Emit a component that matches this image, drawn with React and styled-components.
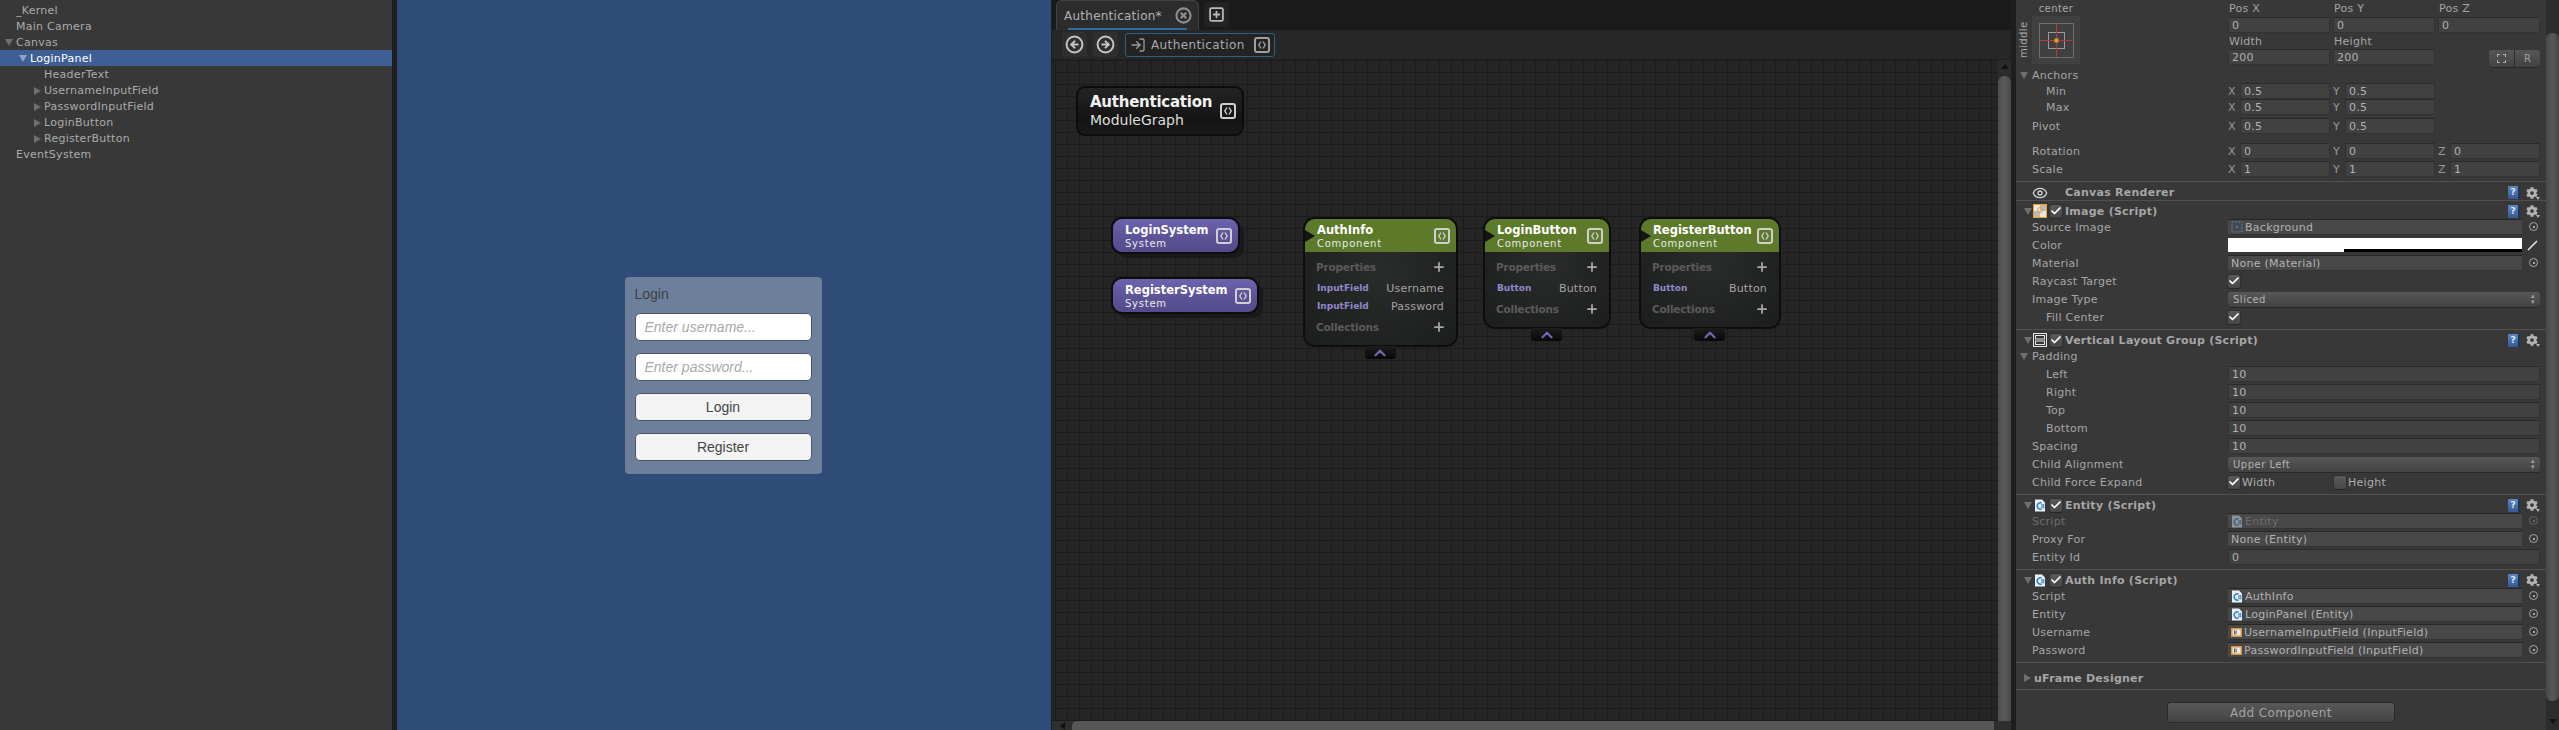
import styled, { createGlobalStyle } from 'styled-components';
import { CircleArrowLeft, CircleArrowRight, CircleX, SquarePlus, LogIn, Eye, Plus, ChevronUp, Check } from 'lucide-react';
import { FaCog } from 'react-icons/fa';

const UI_FONT = '"DejaVu Sans", sans-serif';

const GlobalStyle = createGlobalStyle`
    html, body {
        margin: 0;
        padding: 0;
        background: #1c1c1c;
        overflow: hidden;
    }
    * {
        box-sizing: border-box;
    }
`;

// Page columns
const Page = styled.div`
    display: flex;
    width: 2559px;
    height: 730px;
    font-family: ${UI_FONT};
    font-size: 11px;
    letter-spacing: 0.27px;
    color: #adadad;
    background: #1e1e1e;
    overflow: hidden;
`;

// Hierarchy
const Hierarchy = styled.div`
    width: 392px;
    margin-right: 5px;
    padding-top: 2px;
    background: #383838;
    flex-shrink: 0;
`;

const TreeRow = styled.div`
    display: flex;
    align-items: center;
    height: 16px;
    padding-left: ${p => 2 + p.$depth * 14}px;
    padding-top: 1px;
    background: ${p => (p.$selected ? '#3e5f96' : 'transparent')};
    color: ${p => (p.$selected ? '#ffffff' : '#ababab')};
    white-space: nowrap;
`;

const ArrowSlot = styled.span`
    display: flex;
    align-items: center;
    justify-content: center;
    width: 14px;
    height: 15px;
    flex-shrink: 0;
`;

const TriDown = styled.span`
    display: block;
    width: 0;
    height: 0;
    border-left: 4px solid transparent;
    border-right: 4px solid transparent;
    border-top: 7px solid ${p => p.$color || '#6f6f6f'};
`;

const TriRight = styled.span`
    display: block;
    width: 0;
    height: 0;
    border-top: 4px solid transparent;
    border-bottom: 4px solid transparent;
    border-left: 7px solid #6f6f6f;
`;

// Game view
const GameView = styled.div`
    display: flex;
    justify-content: center;
    align-items: flex-start;
    width: 654px;
    padding: 277px 2px 0 0;
    margin-right: 1px;
    background: #2f4c78;
    flex-shrink: 0;
`;

const LoginPanel = styled.div`
    display: flex;
    flex-direction: column;
    gap: 12px;
    width: 197px;
    height: 197px;
    padding: 9px 10px;
    background: #6e7f9b;
    border-radius: 4px;
    font-family: "Liberation Sans", sans-serif;
    font-size: 14px;
    letter-spacing: 0;
`;

const PanelTitle = styled.div`
    height: 14.5px;
    line-height: 17px;
    color: #3d4048;
`;

const TextInput = styled.input`
    width: 100%;
    height: 28px;
    padding: 0 9px;
    border: 1px solid #4d5465;
    border-radius: 5px;
    background: #ffffff;
    font-family: inherit;
    font-size: 14px;
    font-style: italic;
    outline: none;
    &::placeholder {
        color: #a9a9a9;
        opacity: 1;
    }
`;

const PanelButton = styled.button`
    width: 100%;
    height: 28px;
    padding: 0;
    border: 1px solid #4d5465;
    border-radius: 5px;
    background: #f4f4f4;
    color: #444444;
    font-family: inherit;
    font-size: 14px;
`;

// Graph editor
const GraphEditor = styled.div`
    display: flex;
    flex-direction: column;
    width: 959px;
    margin-right: 5px;
    flex-shrink: 0;
`;

const TabBar = styled.div`
    display: flex;
    align-items: flex-start;
    gap: 5px;
    height: 30px;
    padding-left: 4px;
    background: #1a1a1a;
`;

const Tab = styled.div`
    position: relative;
    display: flex;
    align-items: center;
    justify-content: space-between;
    width: 143px;
    height: 30px;
    padding: 0 6px 0 7px;
    background: #2c2c2c;
    border: 1px solid #434343;
    border-bottom: none;
    border-radius: 6px 6px 0 0;
    color: #b2b2b2;
    font-size: 12px;
    letter-spacing: 0.25px;
    &::after {
        content: '';
        position: absolute;
        left: 11px;
        right: 11px;
        bottom: 0;
        height: 2px;
        background: #2f6d9c;
    }
`;

const IconTile = styled.div`
    display: flex;
    align-items: center;
    justify-content: center;
    width: 25px;
    height: 25px;
    margin-top: 2px;
    border-radius: 3px;
    background: #232323;
    color: #b9b9b9;
`;

const Toolbar = styled.div`
    display: flex;
    align-items: center;
    gap: 6px;
    height: 30px;
    padding-left: 10px;
    background: #272727;
    border-bottom: 1px solid #202020;
`;

const NavButton = styled(IconTile)`
    margin-top: 0;
    background: #2f2f2f;
    color: #c6c6c6;
`;

const Crumb = styled.div`
    display: flex;
    align-items: center;
    justify-content: space-between;
    width: 150px;
    height: 24px;
    margin-left: 1px;
    padding: 0 4px;
    background: #232323;
    border: 1px solid #2b6086;
    border-radius: 3px;
    color: #a9a9a9;
    font-size: 12px;
    letter-spacing: 0.4px;
`;

const CrumbLabel = styled.span`
    flex: 1;
    margin-left: 5px;
`;

const GraphBody = styled.div`
    flex: 1;
    display: grid;
    grid-template-columns: 1fr 13px;
    grid-template-rows: 1fr 9px;
    min-height: 0;
`;

const GraphCanvas = styled.div`
    position: relative;
    overflow: hidden;
    background-color: #252525;
    background-image:
        linear-gradient(#1b1b1b 1px, transparent 1px),
        linear-gradient(90deg, #1b1b1b 1px, transparent 1px);
    background-size: 12px 12px;
    background-position: 3px 0;
`;

const VScroll = styled.div`
    display: flex;
    flex-direction: column;
    align-items: center;
    padding-top: 4px;
    background: #2b2b2b;
`;

const ScrollUp = styled.span`
    width: 0;
    height: 0;
    margin-bottom: 7px;
    border-left: 4px solid transparent;
    border-right: 4px solid transparent;
    border-bottom: 5px solid #111111;
`;

const VThumb = styled.div`
    flex: 1;
    width: 13px;
    border-radius: 6px 6px 0 0;
    background: linear-gradient(90deg, #4c4c4c, #5a5a5a 50%, #484848);
`;

const HScroll = styled.div`
    grid-column: 1 / 3;
    display: flex;
    align-items: center;
    padding-left: 8px;
    background: #2e2e2e;
`;

const ScrollLeft = styled.span`
    width: 0;
    height: 0;
    margin-right: 7px;
    border-top: 4px solid transparent;
    border-bottom: 4px solid transparent;
    border-right: 5px solid #111111;
`;

const HThumb = styled.div`
    width: 922px;
    height: 9px;
    border-radius: 5px 0 0 0;
    background: #565656;
`;

// Graph nodes, their place on the canvas is the content
const NodeBox = styled.div`
    position: absolute;
    left: ${p => p.$x}px;
    top: ${p => p.$y}px;
    width: ${p => p.$w}px;
`;

const ModuleNode = styled(NodeBox)`
    display: flex;
    align-items: center;
    justify-content: space-between;
    height: 50px;
    padding: 0 6px 0 12px;
    background: linear-gradient(#232323, #141414 70%, #191919);
    border: 2px solid #0c0c0c;
    border-radius: 9px;
    color: #f2f2f2;
`;

const ModuleName = styled.div`
    font-size: 15px;
    font-weight: bold;
    line-height: 18px;
    letter-spacing: -0.25px;
`;

const ModuleKind = styled.div`
    font-size: 14px;
    line-height: 18px;
    letter-spacing: 0;
    color: #dedede;
`;

const SystemNode = styled(NodeBox)`
    display: flex;
    align-items: center;
    justify-content: space-between;
    height: 33px;
    padding: 0 6px 0 12px;
    background: linear-gradient(#6c64ae, #5d5499 50%, #544b8d);
    border-radius: 9px;
    box-shadow: 0 0 0 2px #0d0d0d, 5px 5px 0 1px #191919;
`;

const NodeTitle = styled.div`
    color: #ffffff;
    font-size: 11.5px;
    font-weight: bold;
    line-height: 15px;
    letter-spacing: 0;
    white-space: nowrap;
`;

const NodeKind = styled.div`
    color: #e8e8e8;
    font-size: 10px;
    line-height: 11px;
    letter-spacing: 0.75px;
`;

const ComponentNode = styled(NodeBox)`
    border-radius: 10px;
    background: radial-gradient(ellipse at 50% 40%, #2a2c2b, #1c1d1d);
    box-shadow: 0 0 0 2px #0d0d0d;
`;

const NodeHeader = styled.div`
    position: relative;
    display: flex;
    align-items: center;
    justify-content: space-between;
    height: 33px;
    padding: 0 6px 0 12px;
    border-radius: 10px 10px 0 0;
    background: #5c7a2a;
    &::before {
        content: '';
        position: absolute;
        left: 0;
        top: 11px;
        border-top: 6px solid transparent;
        border-bottom: 6px solid transparent;
        border-left: 10px solid #141414;
    }
`;

const NodeBody = styled.div`
    display: flex;
    flex-direction: column;
    padding: 6px 10px 9px 11px;
`;

const GroupRow = styled.div`
    display: flex;
    align-items: center;
    justify-content: space-between;
    height: 18px;
    color: #5b5b5b;
    font-size: 10.5px;
    font-weight: bold;
    letter-spacing: -0.2px;
`;

const ItemList = styled.div`
    margin: 3px 0;
`;

const ItemRow = styled.div`
    display: flex;
    align-items: center;
    justify-content: space-between;
    height: 18px;
    padding: 0 2px 0 1px;
    color: #a3a3a3;
    font-size: 11px;
    letter-spacing: 0.2px;
`;

const ItemType = styled.span`
    color: #8f89cc;
    font-size: 9px;
    font-weight: bold;
    letter-spacing: 0;
`;

const ExpandTab = styled.div`
    position: absolute;
    left: 50%;
    top: 100%;
    display: flex;
    align-items: center;
    justify-content: center;
    width: 31px;
    height: 13px;
    margin-left: -16px;
    margin-top: 1px;
    background: linear-gradient(#1d1d1d, #080808);
    border-radius: 0 0 3px 3px;
    color: #6f68ae;
`;

const CodeFrame = styled.svg`
    flex-shrink: 0;
`;

function CodeIcon({ size = 16, color = '#cfcfcf' }) {
    return (
        <CodeFrame width={size} height={size} viewBox="0 0 16 16" fill="none" stroke={color}>
            <rect x="1" y="1" width="14" height="14" rx="2" strokeWidth="2" />
            <path d="M7 4.5 L4.8 8 L7 11.5 M9 4.5 L11.2 8 L9 11.5" strokeWidth="1.4" />
        </CodeFrame>
    );
}

function Component({ x, w, title, children }) {
    return (
        <ComponentNode $x={x} $y={159} $w={w}>
            <NodeHeader>
                <div>
                    <NodeTitle>{title}</NodeTitle>
                    <NodeKind>Component</NodeKind>
                </div>
                <CodeIcon />
            </NodeHeader>
            <NodeBody>
                <GroupRow>Properties<Plus size={14} strokeWidth={3} color="#a8a8a8" /></GroupRow>
                <ItemList>{children}</ItemList>
                <GroupRow>Collections<Plus size={14} strokeWidth={3} color="#a8a8a8" /></GroupRow>
            </NodeBody>
            <ExpandTab><ChevronUp size={18} strokeWidth={3} /></ExpandTab>
        </ComponentNode>
    );
}

// Inspector
const InspectorWrap = styled.div`
    display: flex;
    flex: 1;
    min-width: 0;
`;

const Inspector = styled.div`
    display: flex;
    flex-direction: column;
    width: 530px;
    background: #383838;
    flex-shrink: 0;
`;

const InspectorScroll = styled.div`
    position: relative;
    flex: 1;
    padding-top: 33px;
    background: #2c2c2c;
`;

const InspectorThumb = styled.div`
    width: 100%;
    height: 668px;
    border-radius: 6px;
    background: linear-gradient(90deg, #484848, #585858 50%, #474747);
`;

const ScrollDown = styled.span`
    position: absolute;
    left: 3px;
    bottom: 6px;
    border-left: 4px solid transparent;
    border-right: 4px solid transparent;
    border-top: 5px solid #111111;
`;

const RectBlock = styled.div`
    display: flex;
    height: 67px;
`;

const AnchorWidget = styled.div`
    display: grid;
    grid-template-columns: 16px 48px;
    grid-template-rows: 16px 48px;
    width: 212px;
    flex-shrink: 0;
`;

const AnchorTop = styled.div`
    grid-column: 2;
    text-align: center;
    font-size: 10px;
    line-height: 18px;
    color: #a8a8a8;
    letter-spacing: 0.4px;
`;

const AnchorSide = styled.div`
    writing-mode: vertical-rl;
    transform: rotate(180deg);
    text-align: center;
    font-size: 10px;
    line-height: 16px;
    color: #a8a8a8;
    letter-spacing: 0.4px;
`;

const RectColumns = styled.div`
    flex: 1;
    display: grid;
    grid-template-columns: repeat(3, 1fr);
    grid-template-rows: 17px 16px 16px;
    column-gap: 3px;
    margin-right: 6px;
`;

const SmallCaption = styled.div`
    padding-left: 1px;
    align-self: center;
    color: #a5a5a5;
`;

const Row = styled.div`
    display: flex;
    align-items: center;
    height: ${p => p.$h || 18}px;
    margin-top: ${p => p.$mt || 0}px;
    padding: 0 6px 0 16px;
`;

const Label = styled.div`
    display: flex;
    align-items: center;
    width: 196px;
    padding-left: ${p => (p.$indent ? 14 : 0)}px;
    color: ${p => (p.$dim ? '#6e6e6e' : '#a6a6a6')};
    flex-shrink: 0;
    white-space: nowrap;
`;

const LabelArrow = styled.span`
    width: 8px;
    margin-left: -12px;
    margin-right: 4px;
`;

const Field = styled.div`
    flex: 1;
    min-width: 0;
    height: 16px;
    padding: 1px 3px 0;
    line-height: 14px;
    background: #414141;
    border-top: 1px solid #2a2a2a;
    border-left: 1px solid #333333;
    border-right: 1px solid #333333;
    border-bottom: 1px solid #333333;
    color: #b2b2b2;
    white-space: nowrap;
    overflow: hidden;
`;

const Axes = styled.div`
    flex: 1;
    display: grid;
    grid-template-columns: repeat(3, 1fr);
    column-gap: 3px;
`;

const AxisCell = styled.div`
    display: flex;
    align-items: center;
`;

const AxisLetter = styled.span`
    width: 12px;
    flex-shrink: 0;
    color: #9a9a9a;
`;

const ObjectField = styled.div`
    display: flex;
    align-items: center;
    gap: 2px;
    flex: 1;
    min-width: 0;
    height: 16px;
    margin-right: 18px;
    padding-left: 3px;
    background: #484848;
    border-top: 1px solid #262626;
    border-bottom: 1px solid #333333;
    color: ${p => (p.$dim ? '#6f6f6f' : '#b2b2b2')};
    white-space: nowrap;
    position: relative;
`;

const Picker = styled.span`
    position: absolute;
    right: -16px;
    top: 2px;
    width: 9px;
    height: 9px;
    border: 1px solid ${p => (p.$dim ? '#666666' : '#a5a5a5')};
    border-radius: 50%;
    &::after {
        content: '';
        position: absolute;
        left: 2.5px;
        top: 2.5px;
        width: 2px;
        height: 2px;
        background: ${p => (p.$dim ? '#666666' : '#a5a5a5')};
    }
`;

const ColorField = styled.div`
    position: relative;
    flex: 1;
    height: 14px;
    margin-right: 18px;
    background: #ffffff;
    &::after {
        content: '';
        position: absolute;
        left: 116px;
        right: 0;
        bottom: 0;
        height: 3px;
        background: #000000;
    }
`;

const Dropper = styled.svg`
    position: absolute;
    right: -18px;
    top: 0;
`;

const Dropdown = styled.div`
    display: flex;
    align-items: center;
    justify-content: space-between;
    flex: 1;
    height: 15px;
    padding: 0 5px;
    border-radius: 3px;
    background: linear-gradient(#585858, #424242);
    box-shadow: 0 1px 0 #282828;
    color: #b2b2b2;
    font-size: 10px;
    letter-spacing: 0.5px;
`;

const DropdownArrows = styled.span`
    font-size: 7px;
    line-height: 6px;
    color: #a0a0a0;
    text-align: center;
`;

const CheckBox = styled.span`
    display: inline-flex;
    align-items: center;
    justify-content: center;
    width: 12px;
    height: 13px;
    background: linear-gradient(#5a5a5a, #474747);
    border-radius: 2px;
    box-shadow: 0 1px 0 #262626, 0 0 0 1px #303030;
    color: #ffffff;
    flex-shrink: 0;
`;

const CheckLabel = styled.span`
    width: ${p => p.$w}px;
    margin-left: 2px;
`;

const Section = styled.div`
    margin-top: ${p => p.$mt || 0}px;
    padding-bottom: ${p => p.$pb ?? 3}px;
    border-top: 1px solid #505050;
`;

const SectionHeader = styled.div`
    display: flex;
    align-items: center;
    height: ${p => p.$h || 17}px;
    padding: 3px 6px 0 7px;
`;

const SectionTitle = styled.div`
    flex: 1;
    margin-left: ${p => p.$ml || 3}px;
    color: #a6a6a6;
    font-size: 11px;
    font-weight: bold;
    letter-spacing: 0.25px;
    white-space: nowrap;
`;

const HeaderSlot = styled.span`
    display: flex;
    align-items: center;
    justify-content: center;
    width: ${p => p.$w}px;
    margin-right: ${p => p.$mr || 0}px;
    flex-shrink: 0;
`;

const HelpBook = styled.span`
    width: 12px;
    height: 13px;
    margin-right: 6px;
    background: linear-gradient(#5f87c1, #35588f);
    border-right: 2px solid #1f3558;
    border-radius: 1px;
    color: #dfe8f5;
    font-size: 9px;
    font-weight: bold;
    line-height: 13px;
    letter-spacing: 0;
    text-align: center;
`;

const GearWrap = styled.span`
    position: relative;
    display: flex;
    width: 14px;
    color: #b3b3b3;
    &::after {
        content: '';
        position: absolute;
        right: 0;
        bottom: -1px;
        border-left: 2px solid transparent;
        border-right: 2px solid transparent;
        border-top: 3px solid #b3b3b3;
    }
`;

const Footer = styled.div`
    display: flex;
    justify-content: center;
    flex: 1;
    padding-top: 12px;
    border-top: 1px solid #505050;
    margin-top: -1px;
`;

const AddButton = styled.button`
    width: 228px;
    height: 21px;
    padding: 0;
    border: 1px solid #2a2a2a;
    border-radius: 3px;
    background: linear-gradient(#585858, #444444);
    color: #a3a3a3;
    font-family: inherit;
    font-size: 12px;
    letter-spacing: 0.4px;
`;

const BlueprintGroup = styled.div`
    grid-column: 3;
    display: flex;
    align-self: end;
    justify-self: end;
    width: 51px;
    height: 17px;
    border-radius: 3px;
    background: linear-gradient(#565656, #424242);
    box-shadow: 0 1px 0 #282828;
    color: #9f9f9f;
    font-size: 10px;
`;

const BlueprintPart = styled.span`
    display: flex;
    align-items: center;
    justify-content: center;
    flex: 1;
    border-left: ${p => (p.$sep ? '1px solid #2f2f2f' : 'none')};
`;

const DashedSquare = styled.span`
    width: 9px;
    height: 9px;
    border: 1px dashed #aaaaaa;
`;

function CsIcon({ size = 12, dim }) {
    return (
        <svg width={size} height={size + 1} viewBox="0 0 12 13" opacity={dim ? 0.45 : 1}>
            <path d="M1 0.5 H8 L11 3.5 V12.5 H1 Z" fill="#e8eef5" />
            <path d="M7.5 4 A3.2 3.2 0 1 0 7.5 10" fill="none" stroke="#2b80c8" strokeWidth="1.6" />
            <path d="M7 6 H10.5 M7 8.2 H10.5 M8 5 V9.5 M9.6 5 V9.5" stroke="#2b80c8" strokeWidth="0.7" />
        </svg>
    );
}

function SpriteIcon() {
    return (
        <svg width="12" height="12" viewBox="0 0 12 12">
            <rect x="1" y="1" width="10" height="10" fill="none" stroke="#4d7da8" strokeDasharray="2 1" />
            <rect x="5" y="5" width="2" height="2" fill="#4d7da8" />
        </svg>
    );
}

function InputFieldIcon() {
    return (
        <svg width="11" height="9" viewBox="0 0 11 9">
            <rect width="11" height="9" fill="#d89a3c" />
            <rect x="1.5" y="1.5" width="8" height="6" fill="#e8e8e8" />
            <path d="M3.5 2.5 V6.5 M5 2.5 V6.5" stroke="#555555" />
        </svg>
    );
}

function ImageIcon() {
    return (
        <svg width="14" height="14" viewBox="0 0 14 14">
            <rect x="0.5" y="0.5" width="13" height="13" fill="#b9b9b9" stroke="#f0a020" />
            <rect x="1" y="1" width="6" height="6" fill="#e8e8e8" />
            <rect x="7" y="7" width="6" height="6" fill="#e8e8e8" />
            <circle cx="7" cy="6" r="2.5" fill="none" stroke="#f0a020" />
        </svg>
    );
}

function LayoutIcon() {
    return (
        <svg width="14" height="14" viewBox="0 0 14 14" fill="none" stroke="#e4e4e4">
            <rect x="0.5" y="0.5" width="13" height="13" />
            <rect x="2.5" y="2.5" width="9" height="3.5" />
            <rect x="2.5" y="8" width="9" height="3.5" />
        </svg>
    );
}

function AnchorPreset() {
    return (
        <svg width="48" height="48" viewBox="0 0 48 48">
            <rect width="48" height="48" fill="#404040" />
            <rect x="7.5" y="7.5" width="34" height="34" fill="none" stroke="#6e6e6e" />
            <rect x="16.5" y="16.5" width="16" height="16" fill="none" stroke="#9a9a9a" />
            <path d="M24.5 7 V41 M7 24.5 H42" stroke="#b5393f" />
            <rect x="22.5" y="22.5" width="4" height="4" fill="#e0a020" />
        </svg>
    );
}

function Checked() {
    return <CheckBox><Check size={12} strokeWidth={3.5} /></CheckBox>;
}

function HeaderTools() {
    return (
        <>
            <HelpBook>?</HelpBook>
            <GearWrap><FaCog size={12} /></GearWrap>
        </>
    );
}

function ScriptHeader({ icon, title }) {
    return (
        <SectionHeader>
            <HeaderSlot $w={9}><TriDown /></HeaderSlot>
            <HeaderSlot $w={16} $mr={2}>{icon}</HeaderSlot>
            <Checked />
            <SectionTitle>{title}</SectionTitle>
            <HeaderTools />
        </SectionHeader>
    );
}

function ObjectRow({ label, value, icon, dim }) {
    return (
        <Row>
            <Label $dim={dim}>{label}</Label>
            <ObjectField $dim={dim}>
                {icon}{value}
                <Picker $dim={dim} />
            </ObjectField>
        </Row>
    );
}

function AxisRow({ label, indent, values, h, mt }) {
    const letters = ['X', 'Y', 'Z'];
    return (
        <Row $h={h} $mt={mt}>
            <Label $indent={indent}>{label}</Label>
            <Axes>
                {values.map((value, i) => (
                    <AxisCell key={letters[i]}>
                        <AxisLetter>{letters[i]}</AxisLetter>
                        <Field>{value}</Field>
                    </AxisCell>
                ))}
            </Axes>
        </Row>
    );
}

const treeItems = [
    { name: '_Kernel', depth: 0 },
    { name: 'Main Camera', depth: 0 },
    { name: 'Canvas', depth: 0, open: true },
    { name: 'LoginPanel', depth: 1, open: true, selected: true },
    { name: 'HeaderText', depth: 2 },
    { name: 'UsernameInputField', depth: 2, closed: true },
    { name: 'PasswordInputField', depth: 2, closed: true },
    { name: 'LoginButton', depth: 2, closed: true },
    { name: 'RegisterButton', depth: 2, closed: true },
    { name: 'EventSystem', depth: 0 },
];

export default function App() {
    return (
        <Page>
            <GlobalStyle />

            <Hierarchy>
                {treeItems.map(item => (
                    <TreeRow key={item.name} $depth={item.depth} $selected={item.selected}>
                        <ArrowSlot>
                            {item.open && <TriDown $color={item.selected ? '#8ea4c6' : undefined} />}
                            {item.closed && <TriRight />}
                        </ArrowSlot>
                        {item.name}
                    </TreeRow>
                ))}
            </Hierarchy>

            <GameView>
                <LoginPanel>
                    <PanelTitle>Login</PanelTitle>
                    <TextInput placeholder="Enter username..." readOnly />
                    <TextInput placeholder="Enter password..." readOnly />
                    <PanelButton>Login</PanelButton>
                    <PanelButton>Register</PanelButton>
                </LoginPanel>
            </GameView>

            <GraphEditor>
                <TabBar>
                    <Tab>
                        Authentication*
                        <CircleX size={17} strokeWidth={3} color="#8c8c8c" />
                    </Tab>
                    <IconTile><SquarePlus size={17} strokeWidth={2.5} /></IconTile>
                </TabBar>
                <Toolbar>
                    <NavButton><CircleArrowLeft size={19} strokeWidth={2.5} /></NavButton>
                    <NavButton><CircleArrowRight size={19} strokeWidth={2.5} /></NavButton>
                    <Crumb>
                        <LogIn size={16} strokeWidth={2} color="#9a9a9a" />
                        <CrumbLabel>Authentication</CrumbLabel>
                        <CodeIcon color="#9f9f9f" />
                    </Crumb>
                </Toolbar>
                <GraphBody>
                    <GraphCanvas>
                        <ModuleNode $x={24} $y={26} $w={168}>
                            <div>
                                <ModuleName>Authentication</ModuleName>
                                <ModuleKind>ModuleGraph</ModuleKind>
                            </div>
                            <CodeIcon />
                        </ModuleNode>

                        <SystemNode $x={61} $y={159} $w={125}>
                            <div>
                                <NodeTitle>LoginSystem</NodeTitle>
                                <NodeKind>System</NodeKind>
                            </div>
                            <CodeIcon />
                        </SystemNode>
                        <SystemNode $x={61} $y={219} $w={144}>
                            <div>
                                <NodeTitle>RegisterSystem</NodeTitle>
                                <NodeKind>System</NodeKind>
                            </div>
                            <CodeIcon />
                        </SystemNode>

                        <Component x={253} w={151} title="AuthInfo">
                            <ItemRow><ItemType>InputField</ItemType>Username</ItemRow>
                            <ItemRow><ItemType>InputField</ItemType>Password</ItemRow>
                        </Component>
                        <Component x={433} w={124} title="LoginButton">
                            <ItemRow><ItemType>Button</ItemType>Button</ItemRow>
                        </Component>
                        <Component x={589} w={138} title="RegisterButton">
                            <ItemRow><ItemType>Button</ItemType>Button</ItemRow>
                        </Component>
                    </GraphCanvas>
                    <VScroll>
                        <ScrollUp />
                        <VThumb />
                    </VScroll>
                    <HScroll>
                        <ScrollLeft />
                        <HThumb />
                    </HScroll>
                </GraphBody>
            </GraphEditor>

            <InspectorWrap>
                <Inspector>
                    <RectBlock>
                        <AnchorWidget>
                            <AnchorTop>center</AnchorTop>
                            <AnchorSide>middle</AnchorSide>
                            <AnchorPreset />
                        </AnchorWidget>
                        <RectColumns>
                            <SmallCaption>Pos X</SmallCaption>
                            <SmallCaption>Pos Y</SmallCaption>
                            <SmallCaption>Pos Z</SmallCaption>
                            <Field>0</Field>
                            <Field>0</Field>
                            <Field>0</Field>
                            <SmallCaption>Width</SmallCaption>
                            <SmallCaption>Height</SmallCaption>
                            <span />
                            <Field>200</Field>
                            <Field>200</Field>
                            <BlueprintGroup>
                                <BlueprintPart><DashedSquare /></BlueprintPart>
                                <BlueprintPart $sep>R</BlueprintPart>
                            </BlueprintGroup>
                        </RectColumns>
                    </RectBlock>

                    <Row $h={16}>
                        <Label><LabelArrow><TriDown /></LabelArrow>Anchors</Label>
                    </Row>
                    <AxisRow h={16} indent label="Min" values={['0.5', '0.5']} />
                    <AxisRow h={16} indent label="Max" values={['0.5', '0.5']} />
                    <AxisRow mt={2} label="Pivot" values={['0.5', '0.5']} />
                    <AxisRow mt={7} label="Rotation" values={['0', '0', '0']} />
                    <AxisRow label="Scale" values={['1', '1', '1']} />

                    <Section $pb={0} $mt={3}>
                        <SectionHeader $h={18}>
                            <HeaderSlot $w={9} />
                            <HeaderSlot $w={16}><Eye size={16} color="#cfcfcf" /></HeaderSlot>
                            <SectionTitle $ml={17}>Canvas Renderer</SectionTitle>
                            <HeaderTools />
                        </SectionHeader>
                    </Section>

                    <Section>
                        <ScriptHeader icon={<ImageIcon />} title="Image (Script)" />
                        <ObjectRow label="Source Image" value="Background" icon={<SpriteIcon />} />
                        <Row>
                            <Label>Color</Label>
                            <ColorField>
                                <Dropper width="14" height="14" viewBox="0 0 14 14">
                                    <path d="M2 12 L11 3" stroke="#e6e6e6" strokeWidth="1.6" />
                                </Dropper>
                            </ColorField>
                        </Row>
                        <ObjectRow label="Material" value="None (Material)" />
                        <Row><Label>Raycast Target</Label><Checked /></Row>
                        <Row>
                            <Label>Image Type</Label>
                            <Dropdown>Sliced<DropdownArrows>▴<br />▾</DropdownArrows></Dropdown>
                        </Row>
                        <Row><Label $indent>Fill Center</Label><Checked /></Row>
                    </Section>

                    <Section>
                        <ScriptHeader icon={<LayoutIcon />} title="Vertical Layout Group (Script)" />
                        <Row><Label><LabelArrow><TriDown /></LabelArrow>Padding</Label></Row>
                        <Row><Label $indent>Left</Label><Field>10</Field></Row>
                        <Row><Label $indent>Right</Label><Field>10</Field></Row>
                        <Row><Label $indent>Top</Label><Field>10</Field></Row>
                        <Row><Label $indent>Bottom</Label><Field>10</Field></Row>
                        <Row><Label>Spacing</Label><Field>10</Field></Row>
                        <Row>
                            <Label>Child Alignment</Label>
                            <Dropdown>Upper Left<DropdownArrows>▴<br />▾</DropdownArrows></Dropdown>
                        </Row>
                        <Row>
                            <Label>Child Force Expand</Label>
                            <Checked />
                            <CheckLabel $w={92}>Width</CheckLabel>
                            <CheckBox />
                            <CheckLabel>Height</CheckLabel>
                        </Row>
                    </Section>

                    <Section>
                        <ScriptHeader icon={<CsIcon />} title="Entity (Script)" />
                        <ObjectRow dim label="Script" value="Entity" icon={<CsIcon dim />} />
                        <ObjectRow label="Proxy For" value="None (Entity)" />
                        <Row><Label>Entity Id</Label><Field>0</Field></Row>
                    </Section>

                    <Section>
                        <ScriptHeader icon={<CsIcon />} title="Auth Info (Script)" />
                        <ObjectRow label="Script" value="AuthInfo" icon={<CsIcon />} />
                        <ObjectRow label="Entity" value="LoginPanel (Entity)" icon={<CsIcon />} />
                        <ObjectRow label="Username" value="UsernameInputField (InputField)" icon={<InputFieldIcon />} />
                        <ObjectRow label="Password" value="PasswordInputField (InputField)" icon={<InputFieldIcon />} />
                    </Section>

                    <Section $pb={0}>
                        <SectionHeader $h={27}>
                            <HeaderSlot $w={8}><TriRight /></HeaderSlot>
                            <SectionTitle>uFrame Designer</SectionTitle>
                        </SectionHeader>
                    </Section>

                    <Footer>
                        <AddButton>Add Component</AddButton>
                    </Footer>
                </Inspector>
                <InspectorScroll>
                    <InspectorThumb />
                    <ScrollDown />
                </InspectorScroll>
            </InspectorWrap>
        </Page>
    );
}
